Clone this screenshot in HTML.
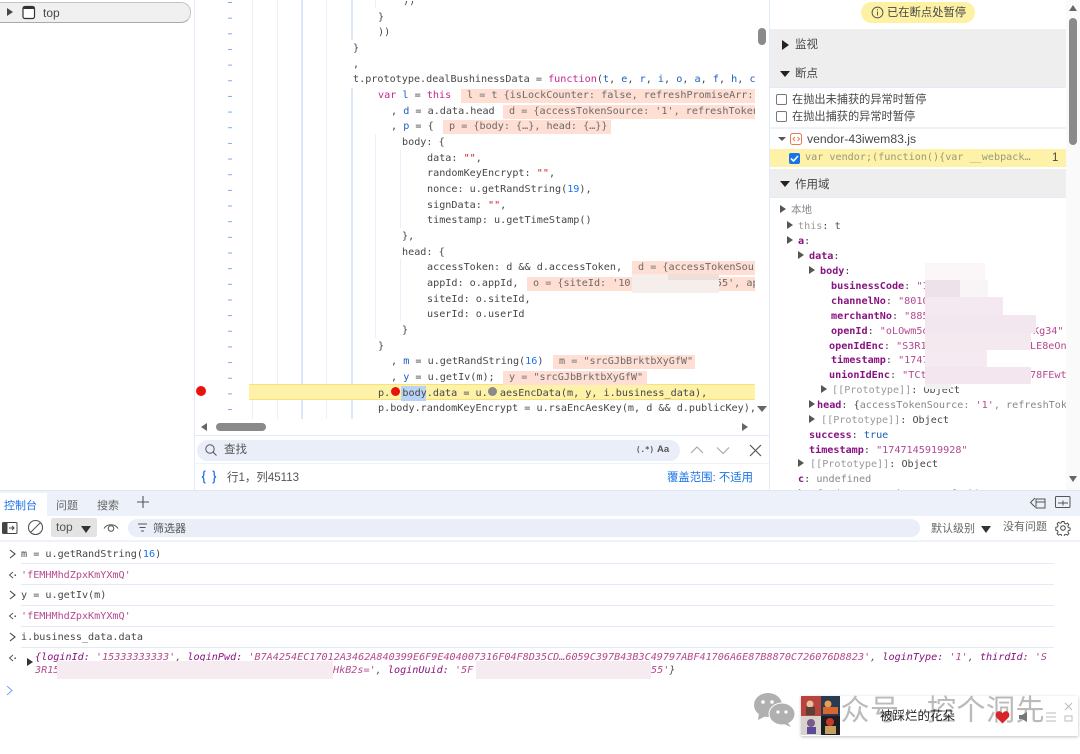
<!DOCTYPE html>
<html><head><meta charset="utf-8">
<style>
html,body{margin:0;padding:0;background:#fff}
#r{position:relative;width:1080px;height:754px;overflow:hidden;background:#fff;font-family:"Liberation Sans","Noto Sans CJK SC",sans-serif;color:#474747}
#r div,#r svg{position:absolute}
.m{font-family:"DejaVu Sans Mono","Liberation Mono",monospace;font-size:10.15px;line-height:16px;height:16px;white-space:pre;color:#474747}
#ed{left:195px;top:1px;width:560px;height:418px;overflow:hidden}
.v{background:#ffdfd3;color:#6b6b6b;display:block;overflow:hidden;height:14px;line-height:14px;margin-top:1px;padding-left:6px}
.k{color:#c8288c}.b{color:#1f5fbf}.s{color:#c5221f}.n{color:#1a73e8}
.g{background:#e9f0fc;width:1px}.g2{background:#dbe7fb;width:2px}
.h{left:770px;width:296px;background:#eeeeee}
.t{font-size:11.5px;line-height:16px;white-space:nowrap;color:#474747}
.kk{color:#881280;font-weight:bold}.st{color:#b5488f}.dim{color:#9a9a9a}
.tri{width:0;height:0;border-left:6px solid #474747;border-top:4px solid transparent;border-bottom:4px solid transparent}
.trd{width:0;height:0;border-top:6px solid #333;border-left:5px solid transparent;border-right:5px solid transparent}
.bl{background:#f3e6ee}
.ln{height:1px;background:#e3ebfa;left:21px;width:1033px}
.c{left:21px}
.str{color:#b5488f}
.ck{width:9px;height:9px;border:1px solid #777;border-radius:2px;left:776px;background:#fff}
</style></head><body><div id="r">

<!-- left panel -->
<div style="left:-12px;top:2px;width:201px;height:19px;background:#f0f0f0;border:1px solid #c4c4c4;border-bottom:1px solid #aaa;border-radius:10px"></div>
<div class="tri" style="left:7px;top:8px"></div>
<svg style="left:22px;top:5px" width="14" height="15" viewBox="0 0 14 15"><rect x="1" y="1.500" width="11.500" height="12" rx="2" fill="#fff" stroke="#333" stroke-width="1.200"/><rect x="1" y="1.500" width="11.500" height="2.500" fill="#333"/></svg>
<div style="left:43px;top:5px;font-size:12px;line-height:16px;color:#474747">top</div>
<div style="left:194px;top:0;width:1px;height:490px;background:#e3ebfa"></div>

<!-- gutter -->
<div style="left:228px;top:2px;width:4px;height:417px;background:linear-gradient(#7aa9ee 1px,transparent 1px) 0 0/100% 15.66px"></div>
<div class="g" style="left:252px;top:0;height:419px"></div>
<div class="g" style="left:277px;top:0;height:419px"></div>
<div class="g2" style="left:301px;top:0;height:419px"></div>
<div class="g" style="left:326px;top:0;height:419px"></div>
<div class="g2" style="left:351px;top:0;height:40px"></div>
<div class="g2" style="left:351px;top:88px;height:331px"></div>
<div class="g" style="left:375px;top:0;height:8px"></div>
<div class="g" style="left:375px;top:134px;height:204px"></div>
<div class="g" style="left:400px;top:150px;height:78px"></div>
<div class="g" style="left:400px;top:259px;height:62px"></div>

<!-- highlighted line -->
<div style="left:249px;top:384px;width:506px;height:16px;background:#fdf2a8;border-top:1px solid #f5e27a;border-bottom:1px solid #f5e27a;box-sizing:border-box"></div>
<div style="left:196px;top:386px;width:10px;height:10px;border-radius:50%;background:#e8140c"></div>

<div id="ed">
<div class="m" style="left:208px;top:-7px">))</div>
<div class="m" style="left:183px;top:8.7px">}</div>
<div class="m" style="left:183px;top:24.3px">))</div>
<div class="m" style="left:158px;top:40px">}</div>
<div class="m" style="left:158px;top:55.6px">,</div>
<div class="m" style="left:158px;top:71.3px">t.prototype.dealBushinessData = <span class="k">function</span>(<span class="b">t</span>, <span class="b">e</span>, <span class="b">r</span>, <span class="b">i</span>, <span class="b">o</span>, <span class="b">a</span>, <span class="b">f</span>, <span class="b">h</span>, <span class="b">c</span></div>
<div class="m" style="left:183px;top:87px"><span class="k">var</span> <span class="b">l</span> = <span class="k">this</span></div>
<div class="m v" style="left:266px;top:87px;width:288px">l = t {isLockCounter: false, refreshPromiseArr:</div>
<div class="m" style="left:196px;top:102.6px">, <span class="b">d</span> = a.data.head</div>
<div class="m v" style="left:308px;top:102.6px;width:246px">d = {accessTokenSource: '1', refreshToken</div>
<div class="m" style="left:196px;top:118.3px">, <span class="b">p</span> = {</div>
<div class="m v" style="left:248px;top:118.3px;width:162px">p = {body: {…}, head: {…}}</div>
<div class="m" style="left:207px;top:133.9px">body: {</div>
<div class="m" style="left:232px;top:149.6px">data: <span class="s">""</span>,</div>
<div class="m" style="left:232px;top:165.3px">randomKeyEncrypt: <span class="s">""</span>,</div>
<div class="m" style="left:232px;top:180.9px">nonce: u.getRandString(<span class="n">19</span>),</div>
<div class="m" style="left:232px;top:196.6px">signData: <span class="s">""</span>,</div>
<div class="m" style="left:232px;top:212.2px">timestamp: u.getTimeStamp()</div>
<div class="m" style="left:207px;top:227.9px">},</div>
<div class="m" style="left:207px;top:243.6px">head: {</div>
<div class="m" style="left:232px;top:259.2px">accessToken: d &amp;&amp; d.accessToken,</div>
<div class="m v" style="left:437px;top:259.2px;width:117px">d = {accessTokenSou</div>
<div class="m" style="left:232px;top:274.9px">appId: o.appId,</div>
<div class="m v" style="left:332px;top:274.9px;width:222px">o = {siteId: '10              55', ap</div>
<div class="m" style="left:232px;top:290.5px">siteId: o.siteId,</div>
<div class="m" style="left:232px;top:306.2px">userId: o.userId</div>
<div class="m" style="left:207px;top:321.9px">}</div>
<div class="m" style="left:183px;top:337.5px">}</div>
<div class="m" style="left:196px;top:353.2px">, <span class="b">m</span> = u.getRandString(<span class="n">16</span>)</div>
<div class="m v" style="left:358px;top:353.2px;width:136px">m = "srcGJbBrktbXyGfW"</div>
<div class="m" style="left:196px;top:368.8px">, <span class="b">y</span> = u.getIv(m);</div>
<div class="m v" style="left:308px;top:368.8px;width:138px">y = "srcGJbBrktbXyGfW"</div>
<div style="left:206px;top:385px;width:25px;height:15px;background:#b8d3f5"></div>
<div class="m" style="left:183px;top:384.5px">p.  body.data = u.  aesEncData(m, y, i.business_data),</div>
<div style="left:196px;top:386px;width:9px;height:9px;border-radius:50%;background:#e8140c"></div>
<div style="left:293px;top:386px;width:9px;height:9px;border-radius:50%;background:#8a8a8a"></div>
<div class="m" style="left:183px;top:400.2px">p.body.randomKeyEncrypt = u.rsaEncAesKey(m, d &amp;&amp; d.publicKey),</div>
<div class="m" style="left:183px;top:415.8px">p.body.signData = u.sign(h, c)</div>
</div>
<!-- redaction in code -->
<div style="left:632px;top:274px;width:87px;height:19px;background:#f6eeea"></div>
<div style="left:668px;top:274px;width:51px;height:6px;background:#eee0d9"></div>

<!-- editor scrollbars -->
<div style="left:755px;top:0;width:14px;height:419px;background:#fff"></div>
<div style="left:758px;top:28px;width:8px;height:17px;background:#8a8a8a;border-radius:4px"></div>
<div class="trd" style="left:757px;top:406px;border-top-color:#666"></div>
<div style="left:769px;top:0;width:1px;height:490px;background:#e3ebfa"></div>
<div style="left:201px;top:423px;width:0;height:0;border-right:6px solid #666;border-top:4px solid transparent;border-bottom:4px solid transparent"></div>
<div style="left:216px;top:423px;width:50px;height:8px;background:#8a8a8a;border-radius:4px"></div>
<div class="tri" style="left:742px;top:423px;border-left-color:#666"></div>
<div style="left:195px;top:435px;width:574px;height:1px;background:#e3ebfa"></div>

<!-- find bar -->
<div style="left:197px;top:440px;width:483px;height:21px;background:#e9eef8;border-radius:11px"></div>
<svg style="left:204px;top:443px" width="14" height="14" viewBox="0 0 14 14"><circle cx="6" cy="6" r="4.200" fill="none" stroke="#555" stroke-width="1"/><path d="M9 9l3.500 3.500" stroke="#555" stroke-width="1.100"/></svg>
<div class="t" style="left:224px;top:442px;font-size:11.500px;color:#555">查找</div>
<div style="left:636px;top:443px;font:bold 7.500px/14px 'DejaVu Sans Mono',monospace;color:#555;white-space:pre">(.*)</div>
<div style="left:657px;top:443px;font:bold 9.500px/14px 'Liberation Sans',sans-serif;color:#555">Aa</div>
<svg style="left:690px;top:444px" width="72" height="13" viewBox="0 0 72 13"><path d="M1 9L7 3L13 9" fill="none" stroke="#aaa" stroke-width="1.200"/><path d="M27 3.500L33 9.500L39 3.500" fill="none" stroke="#aaa" stroke-width="1.200"/><path d="M60 1L71 12M71 1L60 12" stroke="#555" stroke-width="1.200"/></svg>
<div style="left:195px;top:463px;width:574px;height:1px;background:#eef2fb"></div>
<svg style="left:201px;top:470px" width="16" height="14" viewBox="0 0 16 14"><path d="M4.500 1C2.500 1 2.800 2.500 2.800 4.500C2.800 6 2.300 6.700 1 7C2.300 7.300 2.800 8 2.800 9.500C2.800 11.500 2.500 13 4.500 13M11.500 1C13.500 1 13.200 2.500 13.200 4.500C13.200 6 13.700 6.700 15 7C13.700 7.300 13.200 8 13.200 9.500C13.200 11.500 13.500 13 11.500 13" fill="none" stroke="#1a73e8" stroke-width="1.300"/></svg>
<div class="t" style="left:227px;top:470px;font-size:11.500px;color:#555">行1，列45113</div>
<div class="t" style="left:667px;top:470px;font-size:11.400px;color:#1a73e8">覆盖范围: 不适用</div>

<!-- right panel -->
<div style="left:861px;top:2px;width:114px;height:21px;background:#fdf1a4;border-radius:11px"></div>
<svg style="left:871px;top:6px" width="13" height="13" viewBox="0 0 13 13"><circle cx="6.500" cy="6.500" r="5.400" fill="none" stroke="#555"/><path d="M6.500 5.500v4M6.500 3.200v1.200" stroke="#555"/></svg>
<div class="t" style="left:887px;top:5px;font-size:11.300px">已在断点处暂停</div>

<div class="h" style="top:29px;height:59px;border-bottom:1px solid #e3ebfa;box-sizing:border-box"></div>
<div class="tri" style="left:782px;top:40px;border-left-color:#222;border-left-width:7px;border-top-width:5px;border-bottom-width:5px"></div>
<div class="t" style="left:795px;top:37px">监视</div>
<div class="trd" style="left:780px;top:71px;border-top-color:#222"></div>
<div class="t" style="left:795px;top:66px">断点</div>
<div class="ck" style="top:94px"></div>
<div class="t" style="left:792px;top:92px;font-size:11.200px">在抛出未捕获的异常时暂停</div>
<div class="ck" style="top:111px"></div>
<div class="t" style="left:792px;top:109px;font-size:11.200px">在抛出捕获的异常时暂停</div>
<div style="left:770px;top:127px;width:296px;height:2px;background:#eef2fb"></div>
<div class="trd" style="left:778px;top:137px;border-top:4px solid #555;border-left:4px solid transparent;border-right:4px solid transparent"></div>
<svg style="left:790px;top:133px" width="13" height="13" viewBox="0 0 13 13"><rect x=".5" y=".5" width="11" height="11" rx="2" fill="#fff" stroke="#ea7a50"/><path d="M5 4L3 6L5 8M7.500 4L9.500 6L7.500 8" fill="none" stroke="#ea7a50"/></svg>
<div class="t" style="left:807px;top:131px;font-size:12.200px">vendor-43iwem83.js</div>
<div style="left:770px;top:149px;width:296px;height:18px;background:#fdf2a8"></div>
<div style="left:789px;top:153px;width:11px;height:11px;background:#1a73e8;border-radius:2px"></div>
<svg style="left:789px;top:153px" width="11" height="11" viewBox="0 0 11 11"><path d="M2 5.500L4.500 8L9 3" fill="none" stroke="#fff" stroke-width="1.600"/></svg>
<div class="m" style="left:805px;top:150px;color:#9a9a7a">var vendor;(function(){var __webpack…</div>
<div class="t" style="left:1052px;top:150px;font-size:11.500px">1</div>
<div class="h" style="top:169px;height:29px;border-bottom:1px solid #e3ebfa;box-sizing:border-box"></div>
<div class="trd" style="left:780px;top:181px;border-top-color:#222"></div>
<div class="t" style="left:795px;top:177px">作用域</div>

<!-- scope -->
<div style="left:0;top:1.500px;width:0;height:0">
<div class="tri" style="left:780px;top:203px;border-left-color:#555"></div>
<div class="t" style="left:791px;top:200px;font-size:10.500px;color:#888">本地</div>
<div class="tri" style="left:787px;top:219px;border-left-color:#555"></div>
<div class="m" style="left:798px;top:217px"><span class="dim">this</span>: <span style="color:#555">t</span></div>
<div class="tri" style="left:787px;top:234px;border-left-color:#555"></div>
<div class="m" style="left:798px;top:232px"><span class="kk">a</span>:</div>
<div class="tri" style="left:798px;top:249px;border-left-color:#555"></div>
<div class="m" style="left:809px;top:247px"><span class="kk">data</span>:</div>
<div class="tri" style="left:809px;top:264px;border-left-color:#555"></div>
<div class="m" style="left:820px;top:262px"><span class="kk">body</span>:</div>
<div class="m" style="left:831px;top:277px"><span class="kk">businessCode</span>: <span class="st">"1</span></div>
<div class="m" style="left:831px;top:292px"><span class="kk">channelNo</span>: <span class="st">"8010</span></div>
<div class="m" style="left:831px;top:307px"><span class="kk">merchantNo</span>: <span class="st">"885</span></div>
<div class="m" style="left:831px;top:322px"><span class="kk">openId</span>: <span class="st">"oLOwm5d</span></div>
<div class="m" style="left:829px;top:337px"><span class="kk">openIdEnc</span>: <span class="st">"S3R1</span></div>
<div class="m" style="left:831px;top:351px"><span class="kk">timestamp</span>: <span class="st">"1747</span></div>
<div class="m" style="left:829px;top:366px"><span class="kk">unionIdEnc</span>: <span class="st">"TCt</span></div>
<div class="tri" style="left:821px;top:383px;border-left-color:#555"></div>
<div class="m" style="left:832px;top:381px"><span class="dim">[[Prototype]]</span>: Object</div>
<div class="tri" style="left:809px;top:398px;border-left-color:#555"></div>
<div class="m" style="left:817px;top:396px;width:249px;overflow:hidden"><span class="kk">head</span>: {<span style="color:#888">accessTokenSource: <span class="st">'1'</span>, refreshTok</span></div>
<div class="tri" style="left:809px;top:413px;border-left-color:#555"></div>
<div class="m" style="left:821px;top:411px"><span class="dim">[[Prototype]]</span>: Object</div>
<div class="m" style="left:809px;top:426px"><span class="kk">success</span>: <span style="color:#1a5fb4">true</span></div>
<div class="m" style="left:809px;top:441px"><span class="kk">timestamp</span>: <span class="st">"1747145919928"</span></div>
<div class="tri" style="left:798px;top:457px;border-left-color:#555"></div>
<div class="m" style="left:810px;top:455px"><span class="dim">[[Prototype]]</span>: Object</div>
<div class="m" style="left:798px;top:470px"><span class="kk">c</span>: <span style="color:#888">undefined</span></div>
<div class="m" style="left:798px;top:485px;height:3.500px;overflow:hidden"><span class="kk">h</span>: f e(t, e, r, i, o, a, f, h)</div>
<div class="m" style="left:1033px;top:322px"><span class="st">Kg34"</span></div>
<div class="m" style="left:1030px;top:337px;width:36px;overflow:hidden"><span class="st">LE8eOn</span></div>
<div class="m" style="left:1030px;top:366px;width:36px;overflow:hidden"><span class="st">78FEwt</span></div>
</div>

<!-- scope redaction -->
<div class="bl" style="left:925px;top:263px;width:60px;height:17px;background:#fbf7f9"></div>
<div class="bl" style="left:925px;top:280px;width:35px;height:17px;background:#eee2ea"></div>
<div class="bl" style="left:960px;top:280px;width:28px;height:17px;background:#f9f4f6"></div>
<div class="bl" style="left:925px;top:297px;width:78px;height:18px;background:#f4e9f0"></div>
<div class="bl" style="left:925px;top:315px;width:111px;height:18px;background:#f3e7ef"></div>
<div class="bl" style="left:925px;top:333px;width:106px;height:17px;background:#f5e9f0"></div>
<div class="bl" style="left:925px;top:350px;width:62px;height:17px;background:#f5eaf1"></div>
<div class="bl" style="left:925px;top:367px;width:106px;height:17px;background:#f3e6ee"></div>
<div class="bl" style="left:925px;top:384px;width:26px;height:5px;background:#f3f0f2"></div>

<!-- right scrollbar -->
<div style="left:1066px;top:0;width:14px;height:490px;background:#fafafa"></div>
<div style="left:1069px;top:18px;width:8px;height:127px;background:#8a8a8a;border-radius:4px"></div>
<div style="left:1069px;top:5px;width:0;height:0;border-bottom:6px solid #666;border-left:4px solid transparent;border-right:4px solid transparent"></div>
<div style="left:1069px;top:476px;width:0;height:0;border-top:6px solid #666;border-left:4px solid transparent;border-right:4px solid transparent"></div>

<!-- console tabs -->
<div style="left:0;top:490px;width:1080px;height:26px;background:#edf1fa;border-top:1px solid #dfe7f7;box-sizing:border-box"></div>
<div style="left:0;top:493px;width:47px;height:23px;background:#fff"></div>
<div class="t" style="left:4px;top:498px;font-size:11px;color:#1a73e8">控制台</div>
<div class="t" style="left:56px;top:498px;font-size:11px;color:#666">问题</div>
<div class="t" style="left:97px;top:498px;font-size:11px;color:#666">搜索</div>
<svg style="left:136px;top:495px" width="14" height="14" viewBox="0 0 14 14"><path d="M7 1v12M1 7h12" stroke="#555" stroke-width="1.100"/></svg>
<svg style="left:1029px;top:496px" width="18" height="14" viewBox="0 0 18 14"><path d="M6 2L1.500 6.500L6 11" fill="none" stroke="#555"/><rect x="7" y="3" width="9" height="9" fill="none" stroke="#555"/><path d="M7 6h9" stroke="#555"/></svg>
<svg style="left:1055px;top:496px" width="17" height="13" viewBox="0 0 17 13"><rect x=".5" y=".5" width="14.500" height="11" rx="1" fill="none" stroke="#555"/><path d="M3 7h10M8 4.500v5" stroke="#555"/></svg>

<!-- console toolbar -->
<svg style="left:2px;top:521px" width="16" height="14" viewBox="0 0 16 14"><rect x=".5" y="1.500" width="14.500" height="11" rx="1" fill="#fff" stroke="#444"/><rect x=".5" y="1.500" width="5" height="11" fill="#444"/><path d="M7 7h5M10 5l2 2l-2 2" fill="none" stroke="#444"/></svg>
<svg style="left:27px;top:519px" width="17" height="17" viewBox="0 0 17 17"><circle cx="8.500" cy="8.500" r="7" fill="none" stroke="#555" stroke-width="1.100"/><path d="M3.500 13.500L13.500 3.500" stroke="#555" stroke-width="1.100"/></svg>
<div style="left:51px;top:518px;width:46px;height:19px;background:#e3e3e3;border-radius:2px"></div>
<div style="left:56px;top:520px;font-size:12px;line-height:15px;color:#555">top</div>
<div class="trd" style="left:81px;top:526px;border-top-width:7px"></div>
<svg style="left:103px;top:522px" width="16" height="11" viewBox="0 0 16 11"><path d="M1 6.500C4 1.500 12 1.500 15 6.500" fill="none" stroke="#555"/><circle cx="8" cy="6.500" r="2.800" fill="none" stroke="#555"/></svg>
<div style="left:128px;top:519px;width:792px;height:18px;background:#e9eef8;border-radius:9px"></div>
<svg style="left:137px;top:523px" width="11" height="10" viewBox="0 0 11 10"><path d="M1 1h9M2.500 4.500h6M4 8h3" stroke="#555"/></svg>
<div class="t" style="left:153px;top:521px;font-size:11px;color:#555">筛选器</div>
<div class="t" style="left:931px;top:521px;font-size:11px;color:#666">默认级别</div>
<div class="trd" style="left:981px;top:526px;border-top-width:7px"></div>
<div class="t" style="left:1003px;top:519px;font-size:11px;color:#666">没有问题</div>
<svg style="left:1055px;top:520px" width="16" height="16" viewBox="0 0 16 16"><circle cx="8" cy="8" r="2.300" fill="none" stroke="#444"/><path d="M6.800 1h2.400l.4 2 1.500.7 1.800-1 1.500 1.700-1.100 1.700.5 1.500 2 .5v2.300l-2 .5-.5 1.500 1.100 1.700-1.500 1.700-1.800-1-1.500.7-.4 2H6.800l-.4-2-1.500-.7-1.800 1-1.500-1.700 1.100-1.700-.5-1.500-2-.5V7.300l2-.5.5-1.500-1.100-1.700 1.500-1.700 1.800 1 1.500-.7z" fill="none" stroke="#444" transform="translate(.6 .6) scale(.92)"/></svg>
<div style="left:0;top:540px;width:1080px;height:2px;background:#eef2fb"></div>

<!-- console rows -->
<svg style="left:8px;top:549px" width="9" height="10" viewBox="0 0 9 10"><path d="M2 1L7 5L2 9" fill="none" stroke="#444" stroke-width="1.100"/></svg>
<div class="m c" style="top:547px">m = u.getRandString(<span class="n">16</span>)</div>
<div class="ln" style="top:563px"></div>
<svg style="left:8px;top:571px" width="9" height="8" viewBox="0 0 9 8"><path d="M5 1L1.500 4L5 7" fill="none" stroke="#555"/><rect x="6.500" y="3.500" width="1.500" height="1.500" fill="#555"/></svg>
<div class="m c str" style="top:568px">'fEMHMhdZpxKmYXmQ'</div>
<div class="ln" style="top:584px"></div>
<svg style="left:8px;top:590px" width="9" height="10" viewBox="0 0 9 10"><path d="M2 1L7 5L2 9" fill="none" stroke="#444" stroke-width="1.100"/></svg>
<div class="m c" style="top:588px">y = u.getIv(m)</div>
<div class="ln" style="top:605px"></div>
<svg style="left:8px;top:612px" width="9" height="8" viewBox="0 0 9 8"><path d="M5 1L1.500 4L5 7" fill="none" stroke="#555"/><rect x="6.500" y="3.500" width="1.500" height="1.500" fill="#555"/></svg>
<div class="m c str" style="top:609px">'fEMHMhdZpxKmYXmQ'</div>
<div class="ln" style="top:626px"></div>
<svg style="left:8px;top:632px" width="9" height="10" viewBox="0 0 9 10"><path d="M2 1L7 5L2 9" fill="none" stroke="#444" stroke-width="1.100"/></svg>
<div class="m c" style="top:630px">i.business_data.data</div>
<div class="ln" style="top:647px"></div>
<svg style="left:8px;top:654px" width="9" height="8" viewBox="0 0 9 8"><path d="M5 1L1.500 4L5 7" fill="none" stroke="#555"/><rect x="6.500" y="3.500" width="1.500" height="1.500" fill="#555"/></svg>
<div class="tri" style="left:27px;top:658px;border-left-color:#333"></div>
<div class="m" style="left:35px;top:650px;font-style:italic;color:#881280">{loginId: <span class="str">'15333333333'</span><span style="color:#555">,</span> loginPwd: <span class="str">'B7A4254EC17012A3462A840399E6F9E404007316F04F8D35CD…6059C397B43B3C49797ABF41706A6E87B8870C726076D8823'</span><span style="color:#555">,</span> loginType: <span class="str">'1'</span><span style="color:#555">,</span> thirdId: <span class="str">'S</span></div>
<div class="m" style="left:35px;top:663px;font-style:italic;color:#881280"><span class="str">3R15</span></div>
<div class="bl" style="left:57px;top:661px;width:276px;height:18px;background:#f6ebf1"></div>
<div class="m" style="left:333px;top:663px;font-style:italic;color:#881280"><span class="str">HkB2s='</span><span style="color:#555">,</span> loginUuid: <span class="str">'5F</span></div>
<div class="bl" style="left:476px;top:661px;width:175px;height:18px;background:#f6ebf1"></div>
<div class="m" style="left:651px;top:663px;font-style:italic;color:#881280"><span class="str">55'</span><span style="color:#555">}</span></div>
<svg style="left:5px;top:685px" width="9" height="11" viewBox="0 0 9 11"><path d="M2 1L7 5.500L2 10" fill="none" stroke="#7aa9ee" stroke-width="1.100"/></svg>

<!-- watermark -->
<svg style="left:753px;top:692px" width="43" height="36" viewBox="0 0 43 36"><ellipse cx="15" cy="13" rx="14" ry="12" fill="#b0b0b0"/><path d="M6 21L5 28L13 24z" fill="#b0b0b0"/><ellipse cx="29" cy="22" rx="13" ry="11" fill="#b0b0b0" stroke="#fff" stroke-width="1"/><path d="M35 31L38 35L31 32z" fill="#b0b0b0"/><circle cx="10" cy="10" r="1.800" fill="#fff"/><circle cx="19" cy="10" r="1.800" fill="#fff"/><circle cx="25" cy="20" r="1.600" fill="#fff"/><circle cx="33" cy="20" r="1.600" fill="#fff"/></svg>
<div style="left:801px;top:696px;width:277px;height:40px;background:#fff;box-shadow:0 1px 3px rgba(0,0,0,.25)"></div>
<div style="left:811px;top:692px;font-size:29px;line-height:38px;color:rgba(140,140,140,.6);white-space:nowrap;letter-spacing:.5px">公众号</div>
<div style="left:904px;top:692px;font-size:29px;line-height:38px;color:rgba(140,140,140,.6)">·</div>
<div style="left:927px;top:692px;font-size:29px;line-height:38px;color:rgba(140,140,140,.6);white-space:nowrap;letter-spacing:.5px">控个洞先</div>
<svg style="left:801px;top:696px" width="39" height="39" viewBox="0 0 39 39"><rect width="39" height="39" fill="#2a2a35"/><rect width="20" height="20" fill="#b8443c"/><rect x="20" y="0" width="19" height="20" fill="#2a3a52"/><rect y="20" width="20" height="19" fill="#d8d2cc"/><rect x="20" y="20" width="19" height="19" fill="#1e1e22"/><circle cx="9" cy="8" r="3.500" fill="#e9c0a0"/><rect x="5" y="11" width="9" height="8" fill="#5a4038"/><circle cx="27" cy="8" r="3.500" fill="#e8a050"/><rect x="22" y="11" width="15" height="7" fill="#d86830"/><circle cx="10" cy="27" r="4" fill="#7a5a8a"/><rect x="6" y="31" width="9" height="7" fill="#5a4a9a"/><circle cx="29" cy="26" r="4" fill="#c83a28"/><rect x="24" y="30" width="11" height="8" fill="#c8a060"/></svg>
<div style="left:880px;top:707px;font-size:12.500px;line-height:18px;color:#222;white-space:nowrap">被踩烂的花朵</div>
<svg style="left:995px;top:710px" width="15" height="14" viewBox="0 0 15 14"><path d="M7.500 13.500L1.500 7.500C-1 4 2.500 0 5.500 1.500L7.500 3L9.500 1.500C12.500 0 16 4 13.500 7.500z" fill="#d8232a"/></svg>
<svg style="left:1019px;top:711px" width="10" height="12" viewBox="0 0 10 12"><path d="M0 4h3L8 1v10L3 8H0z" fill="#777"/></svg>
<svg style="left:1045px;top:711px" width="12" height="12" viewBox="0 0 12 12"><path d="M1 2h10M1 6h10M1 10h10" stroke="#bbb"/></svg>
<svg style="left:1064px;top:702px" width="9" height="22" viewBox="0 0 9 22"><path d="M1 1L8 8M8 1L1 8" stroke="#bbb"/><rect x="1" y="14" width="7" height="5" fill="none" stroke="#bbb"/></svg>
</div></body></html>
